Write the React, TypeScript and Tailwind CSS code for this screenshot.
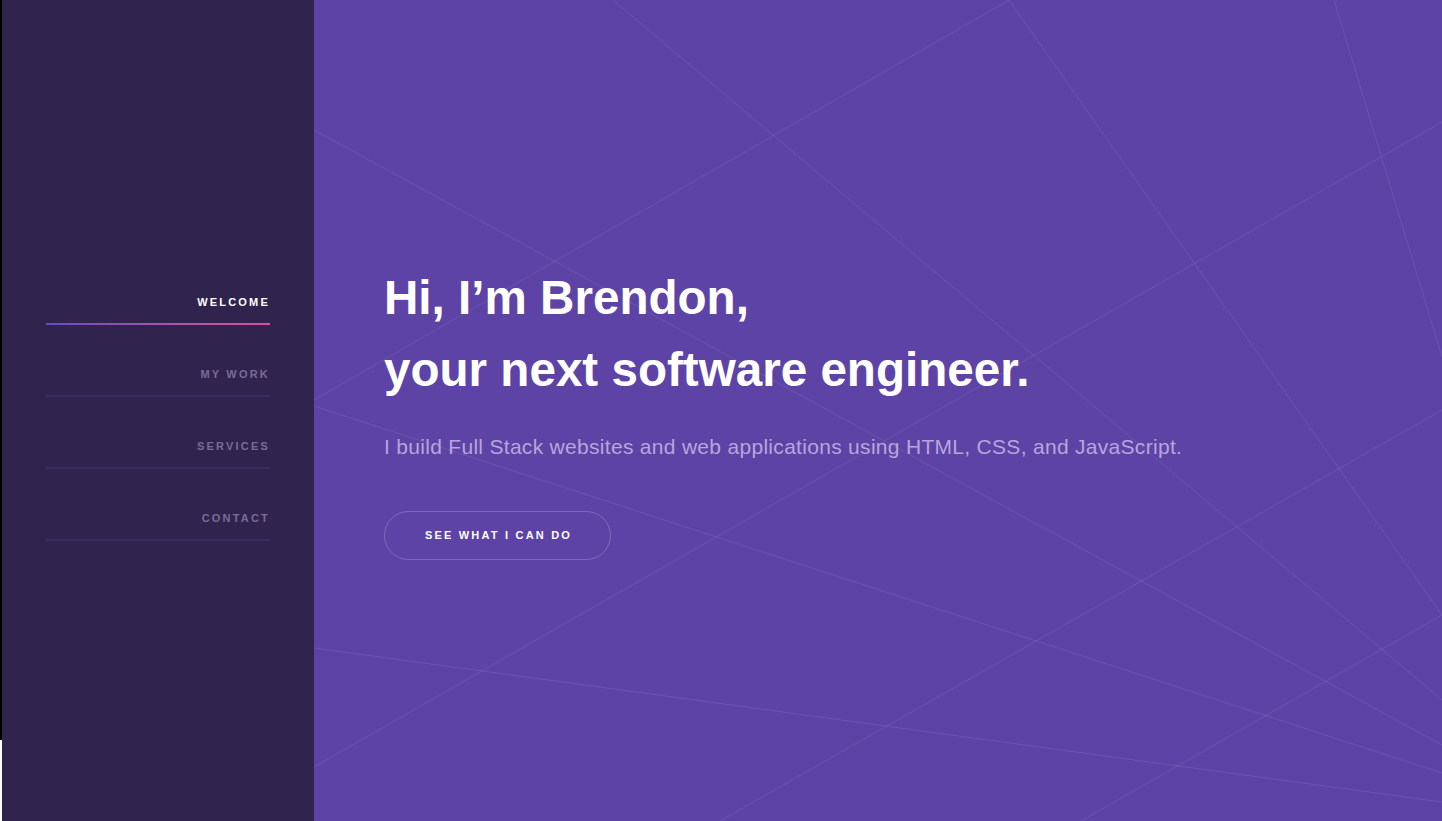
import React from 'react';

const navItems = ['Welcome', 'My Work', 'Services', 'Contact'];

// background lines, coordinates relative to the hero panel (1128 x 821)
const lines = [
  [299, 0, 1128, 700],
  [0, 130, 1128, 745],
  [0, 400, 695, 0],
  [695, 0, 1128, 615],
  [1020, 0, 1128, 357],
  [0, 767, 1128, 122],
  [0, 406, 1128, 773],
  [0, 648, 1128, 802],
  [406, 821, 1128, 410],
  [767, 821, 1128, 615],
];

const Sidebar = () => {
  return (
    <aside className="w-[312px] shrink-0 bg-[#30244f] pl-[44px] pr-[44px] pt-[294px]">
      <nav className="flex flex-col">
        {navItems.map((item, i) => (
          <a
            key={item}
            href="#"
            className={`block ${i < navItems.length - 1 ? 'mb-[41px]' : ''}`}
          >
            <span
              className={`block text-right text-[11px] leading-[16px] font-bold uppercase tracking-[0.2em] ${
                i === 0 ? 'text-white' : 'text-[#7b6b98]'
              }`}
            >
              {item}
            </span>
            <span
              className={`mt-[13px] block h-[2px] w-full ${
                i === 0 ? 'bg-gradient-to-r from-[#674cc0] to-[#dd4f99]' : 'bg-[#3b2c62]'
              }`}
            />
          </a>
        ))}
      </nav>
    </aside>
  );
};

const Hero = () => {
  return (
    <main className="relative flex-1 overflow-hidden bg-[#5d43a5]">
      <svg
        className="absolute inset-0 h-full w-full"
        viewBox="0 0 1128 821"
        preserveAspectRatio="none"
      >
        {lines.map(([x1, y1, x2, y2], i) => (
          <line
            key={i}
            x1={x1}
            y1={y1}
            x2={x2}
            y2={y2}
            stroke="rgba(255,255,255,0.09)"
            strokeWidth="1"
          />
        ))}
      </svg>

      <div className="relative flex h-full flex-col justify-center pl-[70px]">
        <h1 className="text-[47.6px] leading-[72px] font-bold text-white">
          Hi, I’m Brendon,
          <br />
          your next software engineer.
        </h1>
        <p className="mt-[27px] text-[21px] leading-[28px] tracking-[0.3px] text-[#b8a5de]">
          I build Full Stack websites and web applications using HTML, CSS, and JavaScript.
        </p>
        <div className="mt-[50px]">
          <button className="flex h-[49px] w-[227px] items-center justify-center rounded-full border border-white/20 pl-[2px] text-[11px] font-bold uppercase tracking-[0.2em] text-white">
            See what I can do
          </button>
        </div>
      </div>
    </main>
  );
};

export default function App() {
  return (
    <div className="flex h-screen w-full font-['Liberation_Sans',Arial,sans-serif]">
      {/* odd strip on the far left edge */}
      <div className="flex w-[2px] shrink-0 flex-col">
        <div className="h-[740px] bg-black" />
        <div className="flex-1 bg-white" />
      </div>
      <Sidebar />
      <Hero />
    </div>
  );
}
